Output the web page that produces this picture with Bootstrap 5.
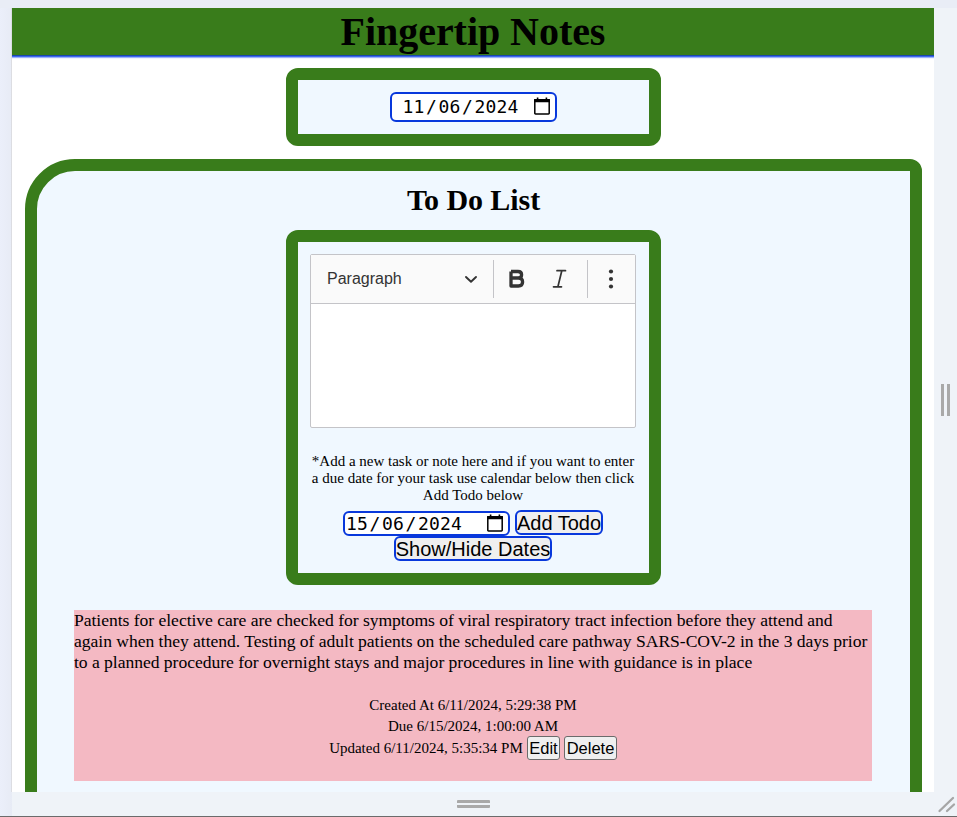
<!DOCTYPE html>
<html lang="en">
<head>
<meta charset="utf-8">
<meta name="viewport" content="width=device-width, initial-scale=1">
<title>Fingertip Notes</title>
<link href="https://cdn.jsdelivr.net/npm/bootstrap@5.3.0/dist/css/bootstrap.min.css" rel="stylesheet">
<style>
  :root { --leaf: #397c1b; --ink-blue: #0838dc; }
  body { background: #eff3f8; color: #000; font-family: "Liberation Serif", "Times New Roman", serif; }
  .stage { height: 817px; padding: 8px 0 0 12px; border-bottom: 1px solid #6b6b6b;
    background: linear-gradient(#e9edf6, #e9edf6) 0 0 / 100% 8px no-repeat, linear-gradient(90deg, #ebeffa, #e7ebf5) 0 0 / 12px 100% no-repeat, #eff3f8; }
  .viewport-page { width: 922px; height: 784px; box-shadow: -1px 0 0 #dcdde2; }
  .grip-side { width: 23px; height: 784px; gap: 3px; }
  .grip-side i { width: 3px; height: 32px; background: #a9a9a9; }
  .grip-base { height: 24px; }
  .grip-base .bars { width: 33px; height: 8px; border: solid #a9a9a9; border-width: 3px 0; border-radius: 1px; margin-left: 445px; }
  .title-bar { height: 47px; background: var(--leaf); box-shadow: 0 1px 0 #1a49a8, 0 2px 0 #3f68f0, 0 3px 1px #9db2f8; }
  .title-bar h1 { font-size: 40px; line-height: 46px; padding-top: 1px; letter-spacing: -.05px; }
  .framed { width: 375px; border: 12px solid var(--leaf); border-radius: 12px; background: #f0f8ff; }
  .date-frame { height: 78px; margin-top: 13px; }
  .todo-frame { height: 355px; padding: 12px 13px 12px 12px; }
  .board { margin: 13px 12px 0 13px; height: 900px; border: 12px solid var(--leaf); border-radius: 50px 12px 0 0; background: #f0f8ff; }
  .board h2 { font-size: 30px; line-height: 34px; margin: 12px 0 13px; letter-spacing: -.08px; }
  .date-box { width: 167px; border: 2px solid var(--ink-blue); border-radius: 6px; background: #fff; font-family: "DejaVu Sans Mono", monospace; font-size: 18px; letter-spacing: .16px; line-height: 20px; }
  .date-box b { width: 14px; font-weight: 400; text-align: center; }
  .date-box.roomy { height: 30px; padding: 0 4px 0 11px; }
  .date-box.tight { height: 25px; padding: 0 4px 0 1px; }
  .date-box svg { margin-top: -1px; }
  .rich { height: 174px; border: 1px solid #c4c4c8; border-radius: 2px; background: #fff; }
  .rich-bar { height: 49px; background: #fafafa; border-bottom: 1px solid #c4c4c8; color: #333; font-family: "Liberation Sans", Arial, sans-serif; font-size: 16px; }
  .rich-bar .picker { width: 182px; padding: 0 12px 0 16px; }
  .rich-bar .rule { width: 1px; height: 38px; background: #c4c4c8; }
  .rich-bar .marks { width: 93px; padding: 0 17px 0 13px; }
  .rich-bar .more { margin-left: 13px; }
  .hint { font-size: 15px; line-height: 17px; margin: 25px -3px 6px; }
  .plain-btn { font-family: "Liberation Sans", Arial, sans-serif; color: #000; background: #efefef; padding: 1px 0 0; border: 2px solid var(--ink-blue); border-radius: 6px; font-size: 20px; line-height: 20px; height: 25px; white-space: nowrap; }
  .entry-row { height: 26px; gap: 5px; }
  .entry-row .date-box { margin-top: 1px; }
  .small-btn { border: 1px solid #6b6b6b; border-radius: 3px; font-size: 16.5px; height: 24px; line-height: 21px; padding: 0 1.5px; }
  .note { margin: 25px 38px 0 37px; height: 171px; background: #f4b9c3; font-size: 17.6px; letter-spacing: -.04px; line-height: 21px; }
  .stamp { font-size: 15px; letter-spacing: 0; margin-top: 22px; }
  .stamp .last-row { margin-top: -1px; }
</style>
</head>
<body class="overflow-hidden">
<div class="stage">
  <div class="d-flex align-items-center">
    <main class="viewport-page bg-white overflow-hidden flex-shrink-0">
      <header class="title-bar text-center"><h1 class="fw-bold m-0">Fingertip Notes</h1></header>
      <section class="framed date-frame mx-auto d-flex align-items-center justify-content-center">
        <div class="date-box roomy d-flex align-items-center"><span>11</span><b>/</b><span>06</span><b>/</b><span>2024</span>
          <svg class="ms-auto" width="18" height="19" viewBox="0 0 18 19"><path d="M1.800 3.200h14.400v13a.7.7 0 0 1-.7.7h-13a.7.7 0 0 1-.7-.7z" fill="none" stroke="#000" stroke-width="1.500"/><path d="M1.100 2h15.800v3.200H1.100zM3.800 .5h1.600v2H3.800zM12.600 .5h1.600v2h-1.600z"/></svg>
        </div>
      </section>
      <section class="board">
        <h2 class="fw-bold text-center">To Do List</h2>
        <div class="framed todo-frame mx-auto">
          <div class="rich">
            <div class="rich-bar d-flex align-items-center">
              <div class="picker d-flex align-items-center justify-content-between"><span>Paragraph</span>
                <svg width="20" height="20" viewBox="0 0 20 20"><path d="M5 8l5 4.800L15 8" fill="none" stroke="#333" stroke-width="1.900" stroke-linecap="round" stroke-linejoin="round"/></svg>
              </div>
              <span class="rule"></span>
              <div class="marks d-flex align-items-center justify-content-between">
                <svg width="20" height="20" viewBox="0 0 20 20"><path d="M4 2.500h7c2.400 0 3.600 1.100 3.600 3.200S13.400 9 11 9H4.200M4 2.500v14.500h7.400c2.700 0 4.200-1.400 4.200-3.900 0-2.600-1.600-4.100-4.200-4.100" fill="none" stroke="#333" stroke-width="3.300" stroke-linejoin="round"/></svg>
                <svg width="20" height="20" viewBox="0 0 20 20"><path d="M7 1.700h8.500M3.500 17.800h8M11.800 1.700 7.900 17.800" fill="none" stroke="#333" stroke-width="1.700" stroke-linecap="round"/></svg>
              </div>
              <span class="rule"></span>
              <svg class="more" width="20" height="20" viewBox="0 0 20 20" fill="#333"><circle cx="10" cy="2.500" r="2.100"/><circle cx="10" cy="10" r="2.100"/><circle cx="10" cy="17.500" r="2.100"/></svg>
            </div>
          </div>
          <p class="hint text-center">*Add a new task or note here and if you want to enter<br>a due date for your task use calendar below then click<br>Add Todo below</p>
          <div class="entry-row d-flex justify-content-center align-items-start">
            <div class="date-box tight d-flex align-items-center"><span>15</span><b>/</b><span>06</span><b>/</b><span>2024</span>
              <svg class="ms-auto" width="18" height="19" viewBox="0 0 18 19"><path d="M1.800 3.200h14.400v13a.7.7 0 0 1-.7.7h-13a.7.7 0 0 1-.7-.7z" fill="none" stroke="#000" stroke-width="1.500"/><path d="M1.100 2h15.800v3.200H1.100zM3.800 .5h1.600v2H3.800zM12.600 .5h1.600v2h-1.600z"/></svg>
            </div>
            <button class="plain-btn">Add Todo</button>
          </div>
          <div class="d-flex justify-content-center"><button class="plain-btn">Show/Hide Dates</button></div>
        </div>
        <article class="note">
          <div class="text-nowrap">Patients for elective care are checked for symptoms of viral respiratory tract infection before they attend and<br>again when they attend. Testing of adult patients on the scheduled care pathway SARS-COV-2 in the 3 days prior<br>to a planned procedure for overnight stays and major procedures in line with guidance is in place</div>
          <div class="stamp text-center">
            <div>Created At 6/11/2024, 5:29:38 PM</div>
            <div>Due 6/15/2024, 1:00:00 AM</div>
            <div class="last-row d-flex justify-content-center align-items-center gap-1"><span>Updated 6/11/2024, 5:35:34 PM</span><button class="plain-btn small-btn">Edit</button><button class="plain-btn small-btn">Delete</button></div>
          </div>
        </article>
      </section>
    </main>
    <div class="grip-side d-flex align-items-center justify-content-center"><i></i><i></i></div>
  </div>
  <div class="grip-base d-flex align-items-center">
    <div class="bars"></div>
    <svg class="ms-auto me-0" width="20" height="18" viewBox="0 0 20 18"><path d="M2.500 16 16 3M10 16l7-6.500" stroke="#a6a6a6" stroke-width="2.300" stroke-linecap="round"/></svg>
  </div>
</div>
<script src="https://cdn.jsdelivr.net/npm/bootstrap@5.3.0/dist/js/bootstrap.bundle.min.js"></script>
</body>
</html>
